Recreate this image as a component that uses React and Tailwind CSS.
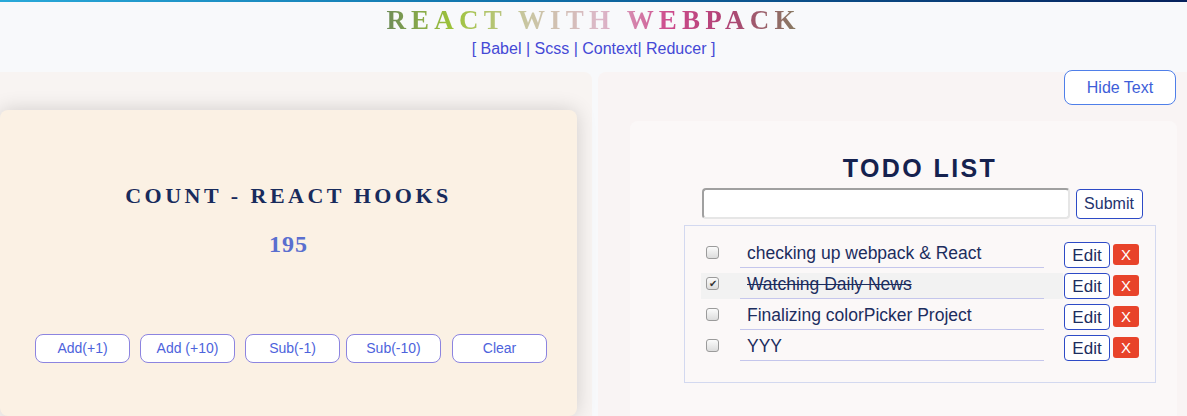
import { useState } from "react";

const serif = { fontFamily: '"Liberation Serif", "Times New Roman", serif' };
const sans = { fontFamily: '"Liberation Sans", Arial, sans-serif' };

const initialTodos = [
  { id: 1, text: "checking up webpack & React", done: false },
  { id: 2, text: "Watching Daily News", done: true },
  { id: 3, text: "Finalizing colorPicker Project", done: false },
  { id: 4, text: "YYY", done: false },
];

function Box({ checked }) {
  return (
    <span className="mt-[4px] ml-[5px] flex h-[13px] w-[13px] items-center justify-center rounded-[3px] border border-[#9b9b9b] bg-[linear-gradient(#fbfbfb,#dcdcdc)] text-[10px] leading-none text-[#333]">
      {checked ? "✔" : ""}
    </span>
  );
}

export default function App() {
  const [count, setCount] = useState(195);
  const [todos] = useState(initialTodos);

  const btns = [
    { label: "Add(+1)", fn: () => setCount(count + 1), cls: "ml-[35px]" },
    { label: "Add (+10)", fn: () => setCount(count + 10), cls: "ml-[10px]" },
    { label: "Sub(-1)", fn: () => setCount(count - 1), cls: "ml-[10px]" },
    { label: "Sub(-10)", fn: () => setCount(count - 10), cls: "ml-[6px]" },
    { label: "Clear", fn: () => setCount(0), cls: "ml-[11px]" },
  ];

  return (
    <div className="h-[416px] w-full overflow-hidden bg-[#f8f9fb]" style={sans}>
      {/* top line */}
      <div className="h-[2px] bg-[linear-gradient(to_right,#29a9d9,#0f6fa8_45%,#06215c)]" />

      <header className="flex h-[70px] flex-col items-center">
        <h1
          className="mt-[3px] bg-[linear-gradient(to_right,#6f8c58,#9dc33a_16%,#c9c6a2_34%,#dcb8c9_52%,#cd4a8c_68%,#b04275_82%,#857e60)] bg-clip-text text-[27px] font-bold leading-[30px] tracking-[5.2px] text-transparent"
          style={serif}
        >
          REACT WITH WEBPACK
        </h1>
        <p className="mt-[4px] text-[16px] leading-[20px] text-[#4549d6]">
          [ Babel | Scss | Context| Reducer ]
        </p>
      </header>

      <div className="flex gap-[6px]">
        {/* counter side */}
        <section className="h-[344px] w-[592px] shrink-0 rounded-tr-lg bg-[#f8f4f2] pt-[38px]">
          <div className="flex h-[306px] w-[577px] flex-col items-center rounded-lg bg-[#fbf1e4] pt-[73px] shadow-[0_0_20px_rgba(0,0,0,0.16)]">
            <h2 className="text-[22px] font-bold leading-[26px] tracking-[3.5px] text-[#182b5c]" style={serif}>
              COUNT - REACT HOOKS
            </h2>
            <div className="mt-[21px] text-[24px] font-bold leading-[28px] tracking-[1px] text-[#5a6fcf]" style={serif}>
              {count}
            </div>
            <div className="mt-[76px] flex w-full">
              {btns.map((b) => (
                <button
                  key={b.label}
                  onClick={b.fn}
                  className={`${b.cls} h-[29px] w-[95px] rounded-lg border border-[#8c84e0] bg-white text-[14px] text-[#4d63dc]`}
                >
                  {b.label}
                </button>
              ))}
            </div>
          </div>
        </section>

        {/* todo side */}
        <section className="h-[344px] flex-1 rounded-tl-lg bg-[#f9f4f4] pl-[32px] pr-[10px]">
          <div className="flex justify-end">
            <button className="-mt-[2px] mr-[1px] h-[35px] w-[112px] rounded-lg border border-[#4f7fe9] bg-white text-[16px] text-[#3e5ed8]">
              Hide Text
            </button>
          </div>

          <div className="mt-[16px] h-[300px] rounded-lg bg-[#fbf8f8] pl-[54px] pt-[33px]">
            <div className="flex w-[472px] flex-col items-center">
              <h2 className="text-[25px] font-bold leading-[28px] tracking-[2.4px] text-[#15224f]">TODO LIST</h2>
              <div className="mt-[6px] flex items-start gap-[6px] pl-[4px]">
                <input
                  className="h-[31px] w-[368px] rounded-[4px] border-2 border-[#a0a0a0] border-r-[#e6e6e6] border-b-[#e6e6e6] bg-white px-2 text-[16px] outline-none"
                  type="text"
                />
                <button className="mt-[1px] h-[30px] w-[67px] rounded-[4px] border border-[#2d4ac6] bg-white text-[16px] text-[#24336e]">
                  Submit
                </button>
              </div>
            </div>

            <ul className="mt-[6px] flex w-[472px] flex-col gap-[5px] border border-[#d3d9f0] pb-[21px] pl-[16px] pt-[16px]">
              {todos.map((t) => (
                <li key={t.id} className="flex h-[26px] items-stretch">
                  <div className={`flex w-[362px] ${t.done ? "bg-[#f2f2f2]" : ""}`}>
                    <Box checked={t.done} />
                    <span
                      className={`ml-[21px] h-[26px] w-[304px] border-b border-[#c4c6ec] pl-[7px] text-[17.5px] leading-[22px] text-[#1c2d5e] ${t.done ? "line-through" : ""}`}
                    >
                      {t.text}
                    </span>
                  </div>
                  <button className="ml-[1px] h-[26px] w-[46px] rounded-[4px] border border-[#2d4ac6] bg-white text-[17px] leading-none text-[#1c2d5e]">
                    Edit
                  </button>
                  <button className="ml-[3px] mt-[2px] h-[21px] w-[26px] rounded-[3px] bg-[#e8432a] text-[15px] leading-none text-white">
                    X
                  </button>
                </li>
              ))}
            </ul>
          </div>
        </section>
      </div>
    </div>
  );
}
